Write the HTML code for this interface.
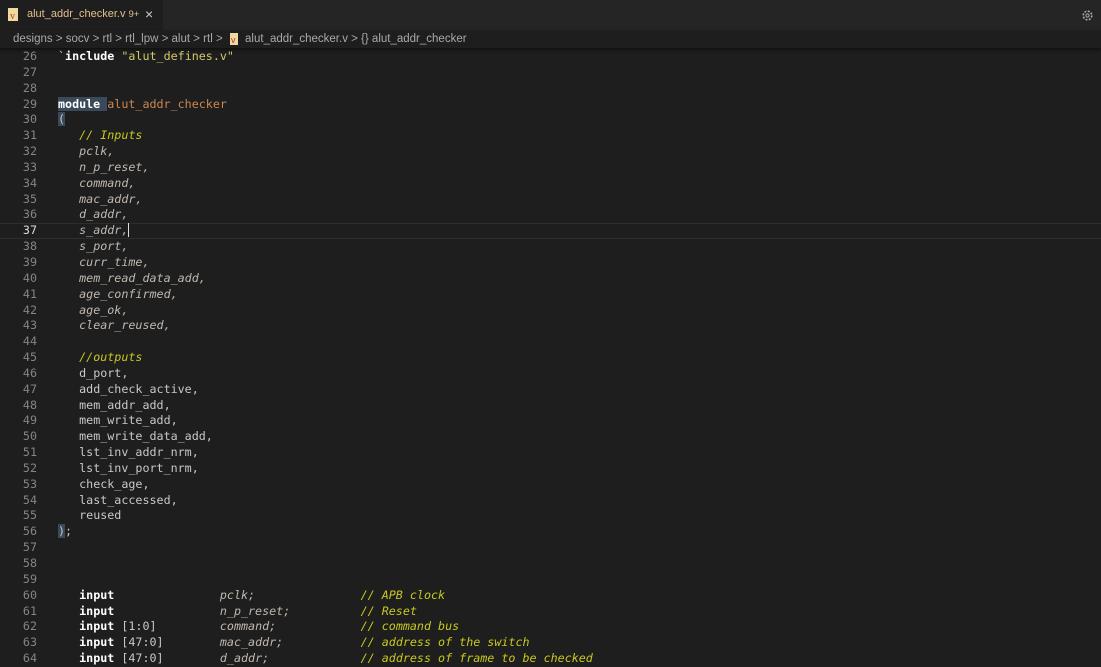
<!DOCTYPE html>
<html><head><meta charset="utf-8"><style>
body{margin:0;width:1101px;height:660px;overflow:hidden;background:#1e1e1e;font-family:"Liberation Sans",sans-serif;}
.tabs{position:absolute;top:0;left:0;width:1101px;height:30px;background:#252526;}
.tab{position:absolute;left:0;top:0;width:163px;height:30px;background:#1e1e1e;color:#e2c08d;font-size:11px;}
.tab span{position:absolute;top:8px;}
.bc{position:absolute;top:30px;left:0;width:1101px;height:18px;background:#1e1e1e;color:#a9a9a9;font-size:11.5px;box-shadow:0 2px 3px #111;}
.bc span{position:absolute;left:13px;top:3px;white-space:pre}
.code{position:absolute;top:49px;left:0;font-family:"DejaVu Sans Mono","Liberation Mono",monospace;font-size:11.7px;}
.l{height:15.85px;line-height:15.85px;white-space:pre;position:relative;}
.n{display:inline-block;width:37px;text-align:right;color:#858585;margin-right:21px;}
.k{color:#fff;font-weight:bold}
.i{color:#c0b8b0;font-style:italic}
.c{color:#c8c820;font-style:italic}
.s{color:#d2c96a}
.m{color:#ce8652}
.p{color:#c8c8c8}
.cur{position:absolute;left:0;width:1101px;border-top:1px solid #2e2e2e;border-bottom:1px solid #2e2e2e;box-sizing:border-box;}
</style></head><body>
<div class="tabs"><div class="tab">
<svg style="position:absolute;left:8px;top:8px" width="10" height="13"><rect x="0" y="0" width="10" height="13" fill="#f0d8a0"/><text x="2" y="11" font-size="10" fill="#b04010" font-family="Liberation Serif">v</text></svg>
<span style="left:27px">alut_addr_checker.v <small style="font-size:9.5px">9+</small></span>
<span style="left:145px;color:#ccc;top:6px;font-size:14px">×</span></div>
<svg style="position:absolute;left:1081px;top:9px" width="13" height="13" viewBox="0 0 13 13"><circle cx="6.5" cy="6.5" r="4.3" fill="none" stroke="#aab" stroke-width="1.6" stroke-dasharray="2 1.4"/><circle cx="6.5" cy="6.5" r="1.6" fill="none" stroke="#aab"/></svg>
</div>
<div class="bc"><span>designs &gt; socv &gt; rtl &gt; rtl_lpw &gt; alut &gt; rtl &gt;       alut_addr_checker.v &gt; {} alut_addr_checker</span>
<svg style="position:absolute;left:230px;top:3px" width="8" height="12"><rect width="8" height="12" fill="#f0d8a0"/><text x="1" y="10" font-size="9" fill="#b04010">v</text></svg></div>
<div class="cur" style="top:223.4px;height:16px"></div>
<div class="code">
<div class="l"><span class="n">26</span><span class="p">`</span><span class="k">include</span> <span class="s">"alut_defines.v"</span></div>
<div class="l"><span class="n">27</span></div>
<div class="l"><span class="n">28</span></div>
<div class="l"><span class="n">29</span><span class="k" style="background:#3a4a5a">module </span><span class="m">alut_addr_checker</span></div>
<div class="l"><span class="n">30</span><span class="p" style="background:#3a4a5a">(</span></div>
<div class="l"><span class="n">31</span>   <span class="c">// Inputs</span></div>
<div class="l"><span class="n">32</span>   <span class="i">pclk,</span></div>
<div class="l"><span class="n">33</span>   <span class="i">n_p_reset,</span></div>
<div class="l"><span class="n">34</span>   <span class="i">command,</span></div>
<div class="l"><span class="n">35</span>   <span class="i">mac_addr,</span></div>
<div class="l"><span class="n">36</span>   <span class="i">d_addr,</span></div>
<div class="l"><span class="n" style="color:#ddd">37</span>   <span class="i">s_addr,</span><span style="border-left:1px solid #ddd"></span></div>
<div class="l"><span class="n">38</span>   <span class="i">s_port,</span></div>
<div class="l"><span class="n">39</span>   <span class="i">curr_time,</span></div>
<div class="l"><span class="n">40</span>   <span class="i">mem_read_data_add,</span></div>
<div class="l"><span class="n">41</span>   <span class="i">age_confirmed,</span></div>
<div class="l"><span class="n">42</span>   <span class="i">age_ok,</span></div>
<div class="l"><span class="n">43</span>   <span class="i">clear_reused,</span></div>
<div class="l"><span class="n">44</span></div>
<div class="l"><span class="n">45</span>   <span class="c">//outputs</span></div>
<div class="l"><span class="n">46</span>   <span class="p">d_port,</span></div>
<div class="l"><span class="n">47</span>   <span class="p">add_check_active,</span></div>
<div class="l"><span class="n">48</span>   <span class="p">mem_addr_add,</span></div>
<div class="l"><span class="n">49</span>   <span class="p">mem_write_add,</span></div>
<div class="l"><span class="n">50</span>   <span class="p">mem_write_data_add,</span></div>
<div class="l"><span class="n">51</span>   <span class="p">lst_inv_addr_nrm,</span></div>
<div class="l"><span class="n">52</span>   <span class="p">lst_inv_port_nrm,</span></div>
<div class="l"><span class="n">53</span>   <span class="p">check_age,</span></div>
<div class="l"><span class="n">54</span>   <span class="p">last_accessed,</span></div>
<div class="l"><span class="n">55</span>   <span class="p">reused</span></div>
<div class="l"><span class="n">56</span><span class="p" style="background:#3a4a5a">)</span><span class="p">;</span></div>
<div class="l"><span class="n">57</span></div>
<div class="l"><span class="n">58</span></div>
<div class="l"><span class="n">59</span></div>
<div class="l"><span class="n">60</span>   <span class="k">input</span>               <span class="i">pclk;</span>               <span class="c">// APB clock</span></div>
<div class="l"><span class="n">61</span>   <span class="k">input</span>               <span class="i">n_p_reset;</span>          <span class="c">// Reset</span></div>
<div class="l"><span class="n">62</span>   <span class="k">input</span> <span class="p">[1:0]</span>         <span class="i">command;</span>            <span class="c">// command bus</span></div>
<div class="l"><span class="n">63</span>   <span class="k">input</span> <span class="p">[47:0]</span>        <span class="i">mac_addr;</span>           <span class="c">// address of the switch</span></div>
<div class="l"><span class="n">64</span>   <span class="k">input</span> <span class="p">[47:0]</span>        <span class="i">d_addr;</span>             <span class="c">// address of frame to be checked</span></div>
</div>
</body></html>
